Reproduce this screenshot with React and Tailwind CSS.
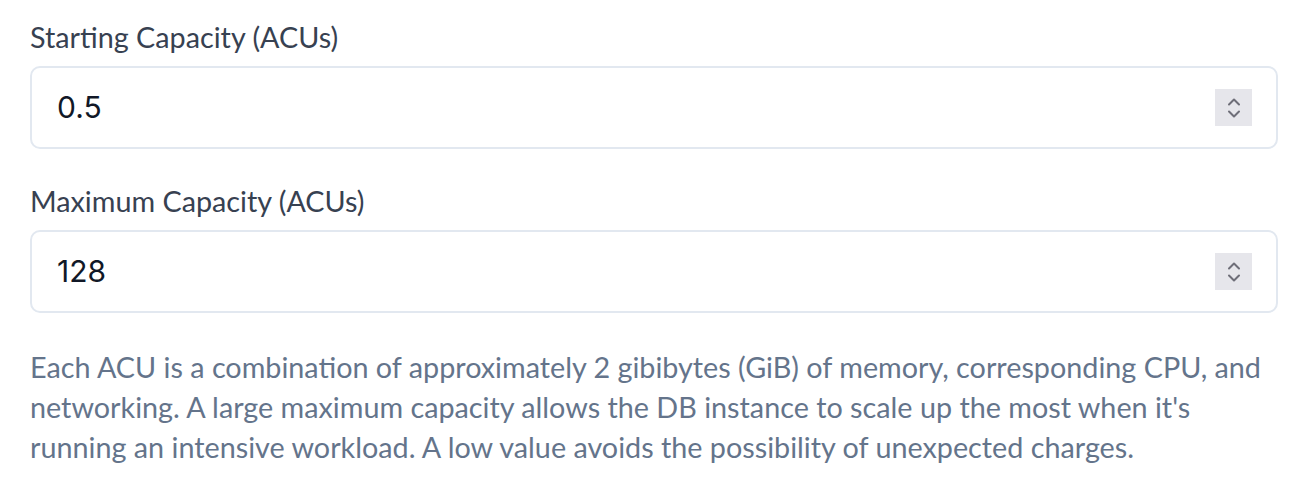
import React from 'react';

const Spinner = () => (
  <div className="w-[37px] h-[37px] bg-[#e6e6eb] flex items-center justify-center">
    <svg width="14" height="24" viewBox="0 0 14 24" fill="none" stroke="#6e6e78" strokeWidth="2" strokeLinecap="round" strokeLinejoin="round">
      <path d="M2 8.5 L7 3.5 L12 8.5" />
      <path d="M2 15.5 L7 20.5 L12 15.5" />
    </svg>
  </div>
);

const NumberField = ({ label, value, className = '' }) => (
  <div className={className}>
    <div className="text-[28.75px] leading-[32px] text-[#374151]">{label}</div>
    <div className="mt-[13px] h-[83px] border-2 border-[#e2e8f0] rounded-[10px] bg-white flex items-center justify-between pl-[25px] pr-[24px]">
      <span className="text-[30px] text-[#111827] font-['Inter',sans-serif]">{value}</span>
      <Spinner />
    </div>
  </div>
);

export default function App() {
  return (
    <div className="w-[1302px] h-[482px] bg-white pl-[30px] pr-[24px] pt-[21px] font-['Lato',sans-serif]">
      <NumberField label="Starting Capacity (ACUs)" value="0.5" />
      <NumberField label="Maximum Capacity (ACUs)" value="128" className="mt-[36px]" />
      <p className="mt-[34px] text-[28.75px] leading-[40px] text-[#64748b]">
        Each ACU is a combination of approximately 2 gibibytes (GiB) of memory, corresponding CPU, and<br />
        networking. A large maximum capacity allows the DB instance to scale up the most when it's<br />
        running an intensive workload. A low value avoids the possibility of unexpected charges.
      </p>
    </div>
  );
}
